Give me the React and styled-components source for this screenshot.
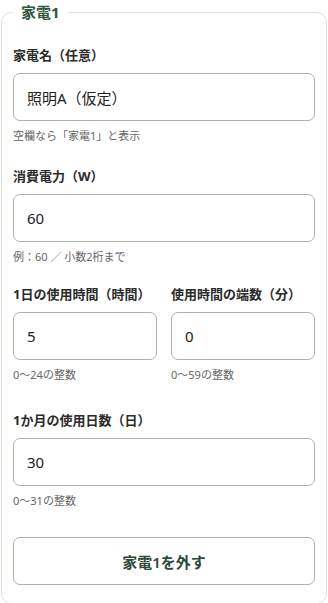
import React from "react";
import styled, { createGlobalStyle } from "styled-components";

const Global = createGlobalStyle`
  html, body { margin: 0; padding: 0; background: #fff; }
  body { font-family: "Noto Sans", "Noto Sans CJK JP", sans-serif; color: #333; }
  * { box-sizing: border-box; }
`;

const Page = styled.div`
  padding: 0 1px 1px 1px;
`;

const Fieldset = styled.fieldset`
  margin: 0;
  border: 1px solid #dde3db;
  border-radius: 10px;
  padding: 21px 11px 18px 11px;
  display: flex;
  flex-direction: column;
  gap: 22px;
  min-width: 0;
`;

const Legend = styled.legend`
  padding: 0 8px;
  font-size: 15px;
  font-weight: 700;
  color: #2f5640;
  line-height: 24px;
`;

const Field = styled.div`
  display: flex;
  flex-direction: column;
  min-width: 0;
`;

const Row = styled.div`
  display: grid;
  grid-template-columns: 1fr 1fr;
  gap: 14px;
  margin: -3px 0 5px;
`;

const Label = styled.label`
  font-size: 13px;
  font-weight: 700;
  line-height: 20px;
  color: #2b2b2b;
  margin-bottom: 8px;
  white-space: nowrap;
`;

const Input = styled.input`
  height: 48px;
  width: 100%;
  border: 1px solid #a9b7a5;
  border-radius: 7px;
  padding: 0 13px;
  font-family: inherit;
  font-size: 15px;
  color: #222;
  background: #fff;
  outline: none;
`;

const Hint = styled.div`
  margin-top: 7px;
  font-size: 11px;
  line-height: 16px;
  color: #666;
`;

const Button = styled.button`
  height: 48px;
  width: 100%;
  margin-top: 6px;
  border: 1px solid #a9b7a5;
  border-radius: 7px;
  background: #fff;
  font-family: inherit;
  font-size: 15px;
  font-weight: 600;
  color: #2f4a3a;
`;

export default function App() {
  return (
    <Page>
      <Global />
      <Fieldset>
        <Legend>家電1</Legend>
        <Field>
          <Label>家電名（任意）</Label>
          <Input defaultValue="照明A（仮定）" />
          <Hint>空欄なら「家電1」と表示</Hint>
        </Field>
        <Field>
          <Label>消費電力（W）</Label>
          <Input defaultValue="60" />
          <Hint>例：60 ／ 小数2桁まで</Hint>
        </Field>
        <Row>
          <Field>
            <Label>1日の使用時間（時間）</Label>
            <Input defaultValue="5" />
            <Hint>0〜24の整数</Hint>
          </Field>
          <Field>
            <Label>使用時間の端数（分）</Label>
            <Input defaultValue="0" />
            <Hint>0〜59の整数</Hint>
          </Field>
        </Row>
        <Field>
          <Label>1か月の使用日数（日）</Label>
          <Input defaultValue="30" />
          <Hint>0〜31の整数</Hint>
        </Field>
        <Button>家電1を外す</Button>
      </Fieldset>
    </Page>
  );
}
